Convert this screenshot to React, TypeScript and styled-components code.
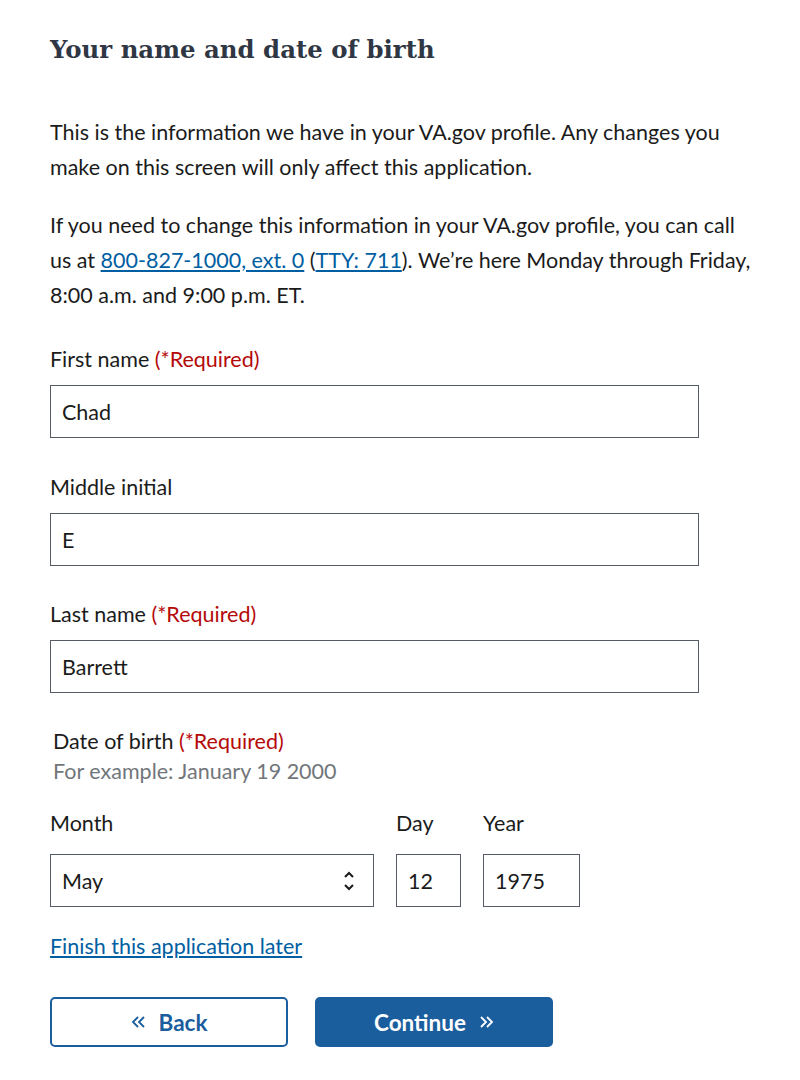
import * as React from 'react';
import styled, { createGlobalStyle } from 'styled-components';

const GlobalStyle = createGlobalStyle`
  body {
    margin: 0;
    background: #ffffff;
    font-family: Lato, 'Noto Sans', sans-serif;
    color: #1b1b1b;
  }
`;

const Page = styled.main`
  width: 720px;
  padding: 0 0 0 50px;
`;

const Title = styled.h1`
  font-family: 'DejaVu Serif', serif;
  font-weight: 700;
  font-size: 24.4px;
  line-height: 30px;
  color: #2f3744;
  margin: 35px 0 0;
`;

const Para = styled.p<{ $top: number }>`
  font-size: 21.5px;
  line-height: 35px;
  margin: ${(p) => p.$top}px 0 0;
  white-space: nowrap;
`;

const Link = styled.a`
  color: #005ea2;
  text-decoration: underline;
  text-underline-offset: 2px;
`;

const Field = styled.div<{ $top: number }>`
  margin-top: ${(p) => p.$top}px;
`;

const Label = styled.label`
  display: block;
  font-size: 21.5px;
  line-height: 24px;
`;

const Required = styled.span`
  color: #b50909;
`;

const TextInput = styled.input<{ $width: number; $top: number }>`
  display: block;
  box-sizing: border-box;
  width: ${(p) => p.$width}px;
  height: 53px;
  margin-top: ${(p) => p.$top}px;
  padding: 0 11px;
  border: 1px solid #565c65;
  border-radius: 0;
  font-family: Lato, 'Noto Sans', sans-serif;
  font-size: 21.5px;
  color: #1b1b1b;
  outline: none;
`;

const Fieldset = styled.fieldset`
  border: 0;
  margin: 36px 0 0;
  padding: 0;
`;

const Legend = styled.div`
  font-size: 21.5px;
  line-height: 24px;
  padding-left: 3px;
`;

const Hint = styled.div`
  font-size: 21.5px;
  line-height: 24px;
  margin-top: 6px;
  color: #71767a;
  padding-left: 3px;
`;

const DateRow = styled.div`
  display: flex;
  gap: 22px;
  margin-top: 28px;
`;

const DatePart = styled.div`
  display: flex;
  flex-direction: column;
`;

const SelectBox = styled.div`
  position: relative;
  box-sizing: border-box;
  width: 324px;
  height: 53px;
  margin-top: 19px;
  border: 1px solid #565c65;
  display: flex;
  align-items: center;
  padding: 0 11px;
  font-size: 21.5px;
`;

const Carets = styled.svg`
  position: absolute;
  right: 18px;
  top: 15px;
`;

const LaterLink = styled(Link)`
  display: block;
  width: fit-content;
  font-size: 21.5px;
  line-height: 24px;
  margin-top: 27px;
`;

const ButtonRow = styled.div`
  display: flex;
  gap: 27px;
  margin-top: 39px;
`;

const Button = styled.button<{ $primary?: boolean }>`
  box-sizing: border-box;
  width: 238px;
  height: 50px;
  border-radius: 5px;
  border: 2px solid #1b5e9e;
  background: ${(p) => (p.$primary ? '#1b5e9e' : '#ffffff')};
  color: ${(p) => (p.$primary ? '#ffffff' : '#1b5e9e')};
  font-family: Lato, 'Noto Sans', sans-serif;
  font-weight: 700;
  font-size: 22.5px;
  display: flex;
  align-items: center;
  justify-content: center;
  gap: 14px;
  cursor: pointer;
`;

const Chevrons = ({ left }: { left?: boolean }) => (
  <svg width="14" height="12" viewBox="0 0 14 12">
    <path
      d={left ? 'M7 1 L2 6 L7 11 M13 1 L8 6 L13 11' : 'M1 1 L6 6 L1 11 M7 1 L12 6 L7 11'}
      fill="none"
      stroke="currentColor"
      strokeWidth="1.8"
    />
  </svg>
);

const App = () => (
  <>
    <GlobalStyle />
    <Page>
      <Title>Your name and date of birth</Title>
      <Para $top={50}>
        This is the information we have in your VA.gov profile. Any changes you
        <br />
        make on this screen will only affect this application.
      </Para>
      <Para $top={23}>
        If you need to change this information in your VA.gov profile, you can call
        <br />
        us at <Link href="#">800-827-1000, ext. 0</Link> (<Link href="#">TTY: 711</Link>).
        We’re here Monday through Friday,
        <br />
        8:00 a.m. and 9:00 p.m. ET.
      </Para>

      <Field $top={34}>
        <Label>
          First name <Required>(*Required)</Required>
        </Label>
        <TextInput $width={649} $top={14} defaultValue="Chad" />
      </Field>

      <Field $top={37}>
        <Label>Middle initial</Label>
        <TextInput $width={649} $top={14} defaultValue="E" />
      </Field>

      <Field $top={36}>
        <Label>
          Last name <Required>(*Required)</Required>
        </Label>
        <TextInput $width={649} $top={14} defaultValue="Barrett" />
      </Field>

      <Fieldset>
        <Legend>
          Date of birth <Required>(*Required)</Required>
        </Legend>
        <Hint>For example: January 19 2000</Hint>
        <DateRow>
          <DatePart>
            <Label>Month</Label>
            <SelectBox>
              May
              <Carets width="12" height="22" viewBox="0 0 12 22">
                <path d="M2 7 L6 3 L10 7 M2 15 L6 19 L10 15" fill="none" stroke="#1b1b1b" strokeWidth="2" />
              </Carets>
            </SelectBox>
          </DatePart>
          <DatePart>
            <Label>Day</Label>
            <TextInput $width={65} $top={19} defaultValue="12" />
          </DatePart>
          <DatePart>
            <Label>Year</Label>
            <TextInput $width={97} $top={19} defaultValue="1975" />
          </DatePart>
        </DateRow>
      </Fieldset>

      <LaterLink href="#">Finish this application later</LaterLink>

      <ButtonRow>
        <Button>
          <Chevrons left />
          Back
        </Button>
        <Button $primary>
          Continue
          <Chevrons />
        </Button>
      </ButtonRow>
    </Page>
  </>
);

export default App;
